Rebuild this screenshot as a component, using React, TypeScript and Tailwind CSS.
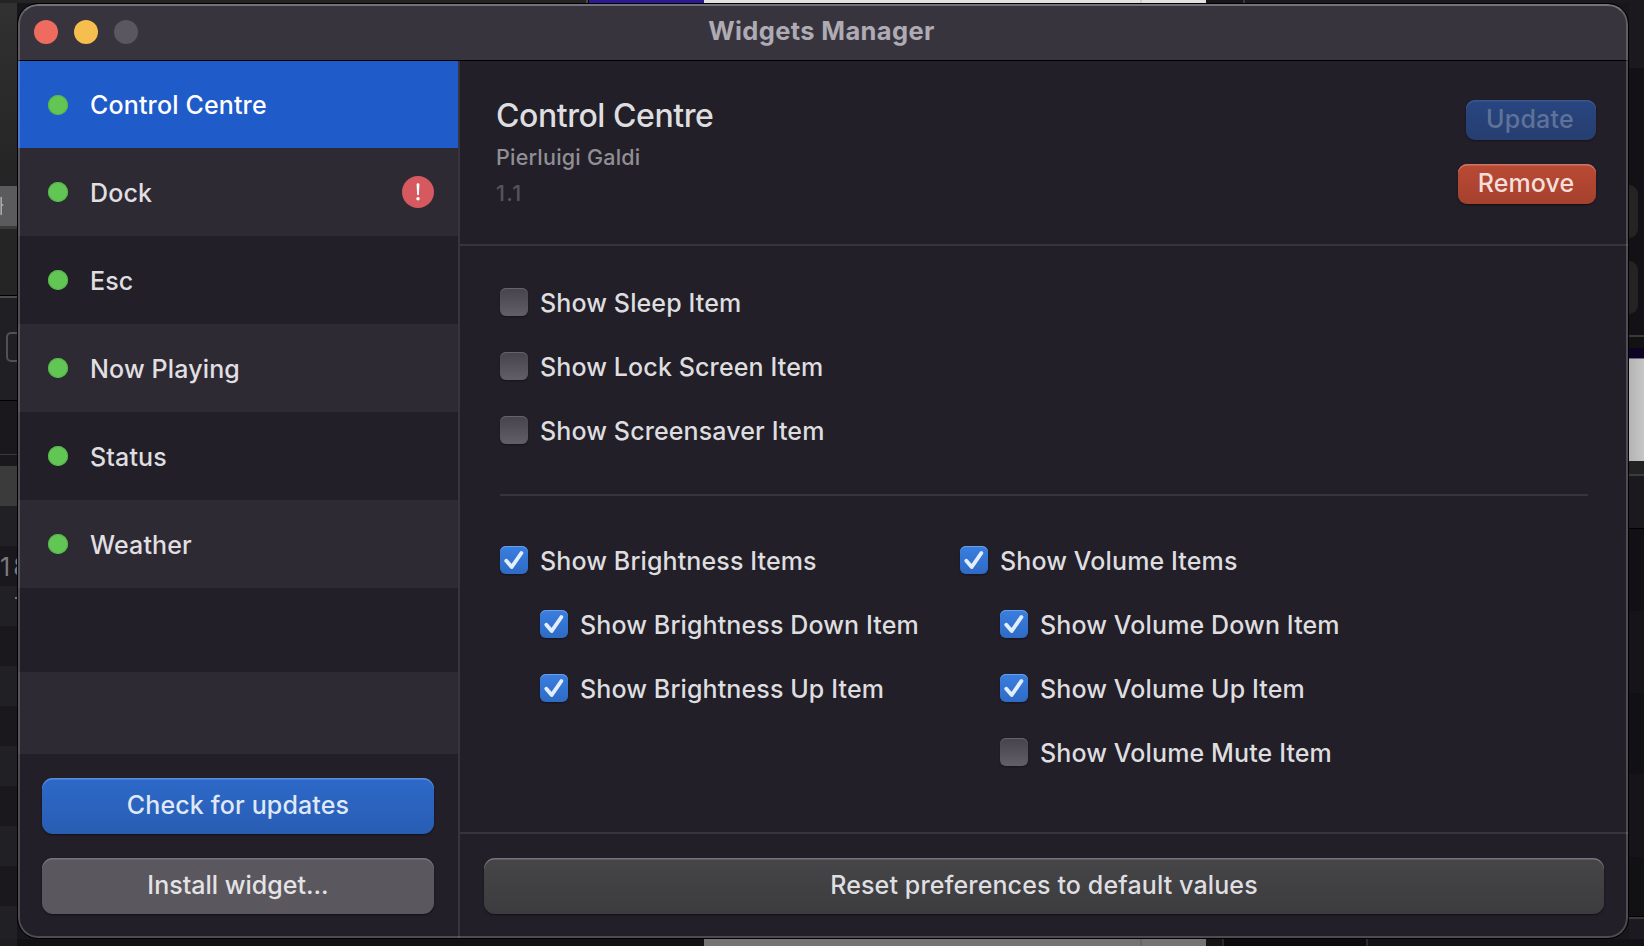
import React from "react";

type Widget = { name: string; height: string; bg: string; alert?: boolean; text: string };

const widgets: Widget[] = [
  { name: "Control Centre", height: "h-[87px]", bg: "bg-[#1f5bc9]", text: "text-white" },
  { name: "Dock", height: "h-[88px]", bg: "bg-[#2d2a34]", text: "text-[#e0dfe1]", alert: true },
  { name: "Esc", height: "h-[88px]", bg: "bg-[#221f29]", text: "text-[#dedddf]" },
  { name: "Now Playing", height: "h-[88px]", bg: "bg-[#2d2a34]", text: "text-[#e0dfe1]" },
  { name: "Status", height: "h-[88px]", bg: "bg-[#221f29]", text: "text-[#dedddf]" },
  { name: "Weather", height: "h-[88px]", bg: "bg-[#2d2a34]", text: "text-[#e0dfe1]" },
];

function Check({ label, checked = false }: { label: string; checked?: boolean }) {
  return (
    <div className="flex h-7 items-center gap-3">
      <div
        className={
          checked
            ? "h-7 w-7 shrink-0 rounded-[6px] bg-linear-to-b from-[#3a7ee0] to-[#2e6bc6] shadow-[inset_0_1px_0_#69a0ea,0_1px_2px_rgba(0,0,0,0.4)]"
            : "h-7 w-7 shrink-0 rounded-[6px] bg-linear-to-b from-[#46434d] to-[#625f67] shadow-[inset_0_1px_0_#66636c,0_1px_2px_rgba(0,0,0,0.35)]"
        }
      >
        {checked && (
          <svg viewBox="0 0 28 28" className="h-7 w-7" fill="none" stroke="#e3edfb" strokeWidth="3.9" strokeLinecap="round" strokeLinejoin="round">
            <path d="M6.3 14.8 L11.7 21 L21.4 7" />
          </svg>
        )}
      </div>
      <span className="mt-px whitespace-nowrap text-[25px] font-[450] leading-7 tracking-[0.12px] text-[#dedddf]">{label}</span>
    </div>
  );
}

function LeftBackdrop() {
  return (
    <div className="flex w-[17px] shrink-0 flex-col overflow-hidden">
      <div className="h-[183px] shrink-0 bg-linear-to-b from-[#313131] to-[#242424]" />
      <div className="flex h-[40px] shrink-0 items-center overflow-hidden bg-[#5b5b5d]">
        <svg width="4" height="20" viewBox="0 0 4 20" fill="none" stroke="#b0b0b0" strokeWidth="1.5">
          <path d="M1.2 1V19M1 9H3.4" />
        </svg>
      </div>
      <div className="h-[3px] shrink-0 bg-[#3b3b3c]" />
      <div className="h-[66px] shrink-0 bg-[#252525]" />
      <div className="h-[3px] shrink-0 border-b-2 border-[#4b4b4b] bg-black" />
      <div className="flex h-[102px] shrink-0 items-start bg-[#201f24] pl-[6px] pt-[34px]">
        <div className="h-[30px] w-[30px] shrink-0 rounded-[5px] border-2 border-[#515055]" />
      </div>
      <div className="h-[1px] shrink-0 bg-black" />
      <div className="h-[53px] shrink-0 bg-[#1a181d]" />
      <div className="h-[1px] shrink-0 bg-[#3a383d]" />
      <div className="h-[11px] shrink-0 bg-[#1a181d]" />
      <div className="h-[40px] shrink-0 bg-[#3b3b3b]" />
      <div className="h-[40px] shrink-0 bg-[#212024]" />
      <div className="h-[40px] shrink-0 overflow-hidden whitespace-nowrap bg-[#1a181d] pt-[7px] text-[25px] leading-[28px] tracking-[3px] text-[#7c7b7e]">18</div>
      <div className="flex h-[40px] shrink-0 justify-end bg-[#212024] pt-[11px]">
        <div className="h-[2px] w-[2px] bg-[#77767a]" />
      </div>
      <div className="h-[40px] shrink-0 bg-[#1a181d]" />
      <div className="h-[40px] shrink-0 bg-[#212024]" />
      <div className="h-[40px] shrink-0 bg-[#1a181d]" />
      <div className="h-[40px] shrink-0 bg-[#212024]" />
      <div className="h-[40px] shrink-0 bg-[#1a181d]" />
      <div className="h-[40px] shrink-0 bg-[#212024]" />
      <div className="h-[40px] shrink-0 bg-[#1a181d]" />
      <div className="grow bg-[#212024]" />
    </div>
  );
}

function RightBackdrop() {
  return (
    <div className="flex w-[15px] shrink-0 flex-col overflow-hidden">
      <div className="h-[65px] shrink-0 bg-[#1b191e]" />
      <div className="h-[117px] shrink-0 bg-[#131115]" />
      <div className="flex h-[150px] shrink-0 flex-col gap-[23px] bg-[#131115]">
        <div className="h-[53px] w-[9px] rounded-r-[9px] bg-[#242424]" />
        <div className="h-[53px] w-[9px] rounded-r-[9px] bg-[#242424]" />
      </div>
      <div className="h-[2px] shrink-0 bg-[#3a3a3a]" />
      <div className="h-[11px] shrink-0 bg-[#121212]" />
      <div className="h-[10px] shrink-0 bg-[#0e0324]" />
      <div className="h-[1px] shrink-0 bg-[#6d6480]" />
      <div className="h-[102px] shrink-0 bg-linear-to-r from-[#b4b4b4] to-[#c6c6c6]" />
      <div className="h-[13px] shrink-0 bg-[#222222]" />
      <div className="h-[2px] shrink-0 bg-[#3c3c3e]" />
      <div className="h-[52px] shrink-0 bg-[#1b191e]" />
      <div className="h-[1px] shrink-0 bg-black" />
      <div className="h-[82px] shrink-0 bg-[#121014]" />
      <div className="h-[82px] shrink-0 bg-[#161418]" />
      <div className="h-[81px] shrink-0 bg-[#111014]" />
      <div className="h-[83px] shrink-0 bg-[#161418]" />
      <div className="h-[59px] shrink-0 bg-[#111013]" />
      <div className="h-[1px] shrink-0 bg-black" />
      <div className="h-[2px] shrink-0 bg-[#3a383e]" />
      <div className="grow bg-[#1c1920]" />
    </div>
  );
}

function Backdrop() {
  return (
    <div className="flex h-full flex-col">
      <div className="flex h-[3px] shrink-0">
        <div className="w-[586px] bg-[#242424]" />
        <div className="w-[2px] bg-[#4a4a4a]" />
        <div className="w-[1px] bg-black" />
        <div className="w-[115px] bg-[#2c1a92]" />
        <div className="w-[436px] bg-[#e2e2e2]" />
        <div className="w-[2px] bg-[#cccccc]" />
        <div className="w-[64px] bg-[#e2e2e2]" />
        <div className="w-[37px] bg-[#17161b]" />
        <div className="w-[2px] bg-[#39383d]" />
        <div className="grow bg-[#1b191e]" />
      </div>
      <div className="flex h-[936px] shrink-0">
        <LeftBackdrop />
        <div className="grow bg-[#17161a]" />
        <RightBackdrop />
      </div>
      <div className="flex grow">
        <div className="w-[17px] bg-[#1e1d21]" />
        <div className="w-[687px] bg-[#121214]" />
        <div className="w-[436px] bg-[#747472]" />
        <div className="w-[2px] bg-[#686866]" />
        <div className="w-[64px] bg-[#747472]" />
        <div className="w-[16px] bg-[#151515]" />
        <div className="w-[2px] bg-[#2a2a2a]" />
        <div className="w-[142px] bg-[#0c0c0e]" />
        <div className="w-[2px] bg-[#2a2a2c]" />
        <div className="grow bg-[#131116]" />
      </div>
    </div>
  );
}

function Sidebar() {
  return (
    <aside className="flex w-[440px] shrink-0 flex-col">
      {widgets.map((w) => (
        <div key={w.name} className={`flex shrink-0 items-center pl-[30px] pr-6 ${w.height} ${w.bg}`}>
          <div className="h-5 w-5 rounded-full bg-[#62c655] shadow-[inset_0_0_0_1px_#56b54a]" />
          <span className={`ml-[22px] mt-px grow text-[25px] font-[450] leading-8 tracking-[0.15px] ${w.text}`}>{w.name}</span>
          {w.alert && (
            <div className="flex h-8 w-8 items-center justify-center rounded-full bg-[#d6595f]">
              <svg width="4" height="18" viewBox="0 0 4 18" fill="#fff">
                <path d="M0.6 1.4 Q0.6 0.2 2 0.2 Q3.4 0.2 3.4 1.4 L2.9 11.4 Q2.8 12.2 2 12.2 Q1.2 12.2 1.1 11.4 Z" />
                <circle cx="2" cy="15.8" r="1.7" />
              </svg>
            </div>
          )}
        </div>
      ))}
      <div className="h-[84px] shrink-0" />
      <div className="h-[82px] shrink-0 bg-[#2d2a34]" />
      <div className="flex flex-col gap-6 px-6 pt-6">
        <button className="h-14 rounded-[11px] bg-linear-to-b from-[#2d69c9] to-[#295db3] pb-px text-[25px] font-[450] tracking-[0.15px] text-[#dfe8f6] shadow-[inset_0_1.5px_0_#5c8cd8,0_1px_2px_rgba(0,0,0,0.5)]">
          Check for updates
        </button>
        <button className="h-14 rounded-[11px] bg-[#5a575f] pb-px text-[25px] font-[450] text-[#e4e3e5] shadow-[inset_0_1.5px_0_#77747b,0_1px_2px_rgba(0,0,0,0.5)]">
          Install widget...
        </button>
      </div>
    </aside>
  );
}

function Details() {
  return (
    <main className="flex grow flex-col border-l-2 border-[#37343e]">
      <header className="flex h-[185px] shrink-0 justify-between border-b-2 border-[#37343e] pl-9 pr-8">
        <div className="flex flex-col pt-[35px]">
          <h1 className="text-[32px] font-[550] leading-10 tracking-[-0.45px] text-[#dedddf]">Control Centre</h1>
          <p className="mt-[5px] text-[21.5px] font-[450] leading-8 tracking-[0.22px] text-[#918f95]">Pierluigi Galdi</p>
          <p className="mt-1 text-[21.5px] font-[450] leading-8 tracking-[1.4px] text-[#56535c]">1.1</p>
        </div>
        <div className="flex flex-col items-end gap-6 pt-[39px]">
          <button className="h-10 w-[130px] rounded-[9px] bg-linear-to-b from-[#284681] to-[#263e70] pb-[3px] pr-1.5 pl-1 text-[25px] font-[450] leading-9 tracking-[0.2px] text-[#5f7299] shadow-[inset_0_1.5px_0_#3c578c,0_1px_2px_rgba(0,0,0,0.4)]">
            Update
          </button>
          <button className="h-10 w-[138px] rounded-[9px] bg-linear-to-b from-[#ba4a34] to-[#a5412e] pb-[3px] pr-1.5 pl-1 text-[25px] font-[450] leading-9 tracking-[0.1px] text-[#f4dedb] shadow-[inset_0_1.5px_0_#cd7767,0_1px_2px_rgba(0,0,0,0.5)]">
            Remove
          </button>
        </div>
      </header>
      <section className="flex grow flex-col pl-10 pr-10 pt-[42px]">
        <div className="flex flex-col gap-9">
          <Check label="Show Sleep Item" />
          <Check label="Show Lock Screen Item" />
          <Check label="Show Screensaver Item" />
        </div>
        <div className="mt-[50px] h-[2px] bg-[#37343e]" />
        <div className="mt-[50px] flex">
          <div className="flex w-[460px] flex-col gap-9">
            <Check label="Show Brightness Items" checked />
            <div className="flex flex-col gap-9 pl-10">
              <Check label="Show Brightness Down Item" checked />
              <Check label="Show Brightness Up Item" checked />
            </div>
          </div>
          <div className="flex flex-col gap-9">
            <Check label="Show Volume Items" checked />
            <div className="flex flex-col gap-9 pl-10">
              <Check label="Show Volume Down Item" checked />
              <Check label="Show Volume Up Item" checked />
              <Check label="Show Volume Mute Item" />
            </div>
          </div>
        </div>
      </section>
      <footer className="flex h-[106px] shrink-0 border-t-2 border-[#37343e] px-6 pt-6">
        <button className="h-14 grow rounded-[11px] bg-linear-to-b from-[#464548] to-[#3c3b3e] pb-px text-[25px] font-[450] tracking-[0.13px] text-[#dfdee0] shadow-[inset_0_1.5px_0_#77767a,0_1px_2px_rgba(0,0,0,0.5)]">
          Reset preferences to default values
        </button>
      </footer>
    </main>
  );
}

export default function App() {
  return (
    <div className="relative h-[946px] w-[1644px] overflow-hidden bg-[#17161a] font-['Inter','Noto_Sans',sans-serif]">
      <Backdrop />
      <div className="absolute left-[18px] top-1 flex h-[934px] w-[1610px] flex-col overflow-hidden rounded-[20px] bg-[#221f29] outline-1 outline-black">
        <div className="flex h-[57px] shrink-0 items-center border-b border-black bg-[#38343e]">
          <div className="flex w-[200px] gap-4 pl-4">
            <span className="h-6 w-6 rounded-full bg-[#ed6b5f]" />
            <span className="h-6 w-6 rounded-full bg-[#f5be4f]" />
            <span className="h-6 w-6 rounded-full bg-[#5a575f]" />
          </div>
          <h2 className="grow pb-0.5 pr-[203px] text-center text-[25.5px] font-bold leading-8 tracking-[0.35px] text-[#aeabb4]">Widgets Manager</h2>
        </div>
        <div className="flex grow">
          <Sidebar />
          <Details />
        </div>
        <div className="pointer-events-none absolute inset-0 rounded-[20px] border-2 border-white/20 border-t-white/30" />
      </div>
    </div>
  );
}
